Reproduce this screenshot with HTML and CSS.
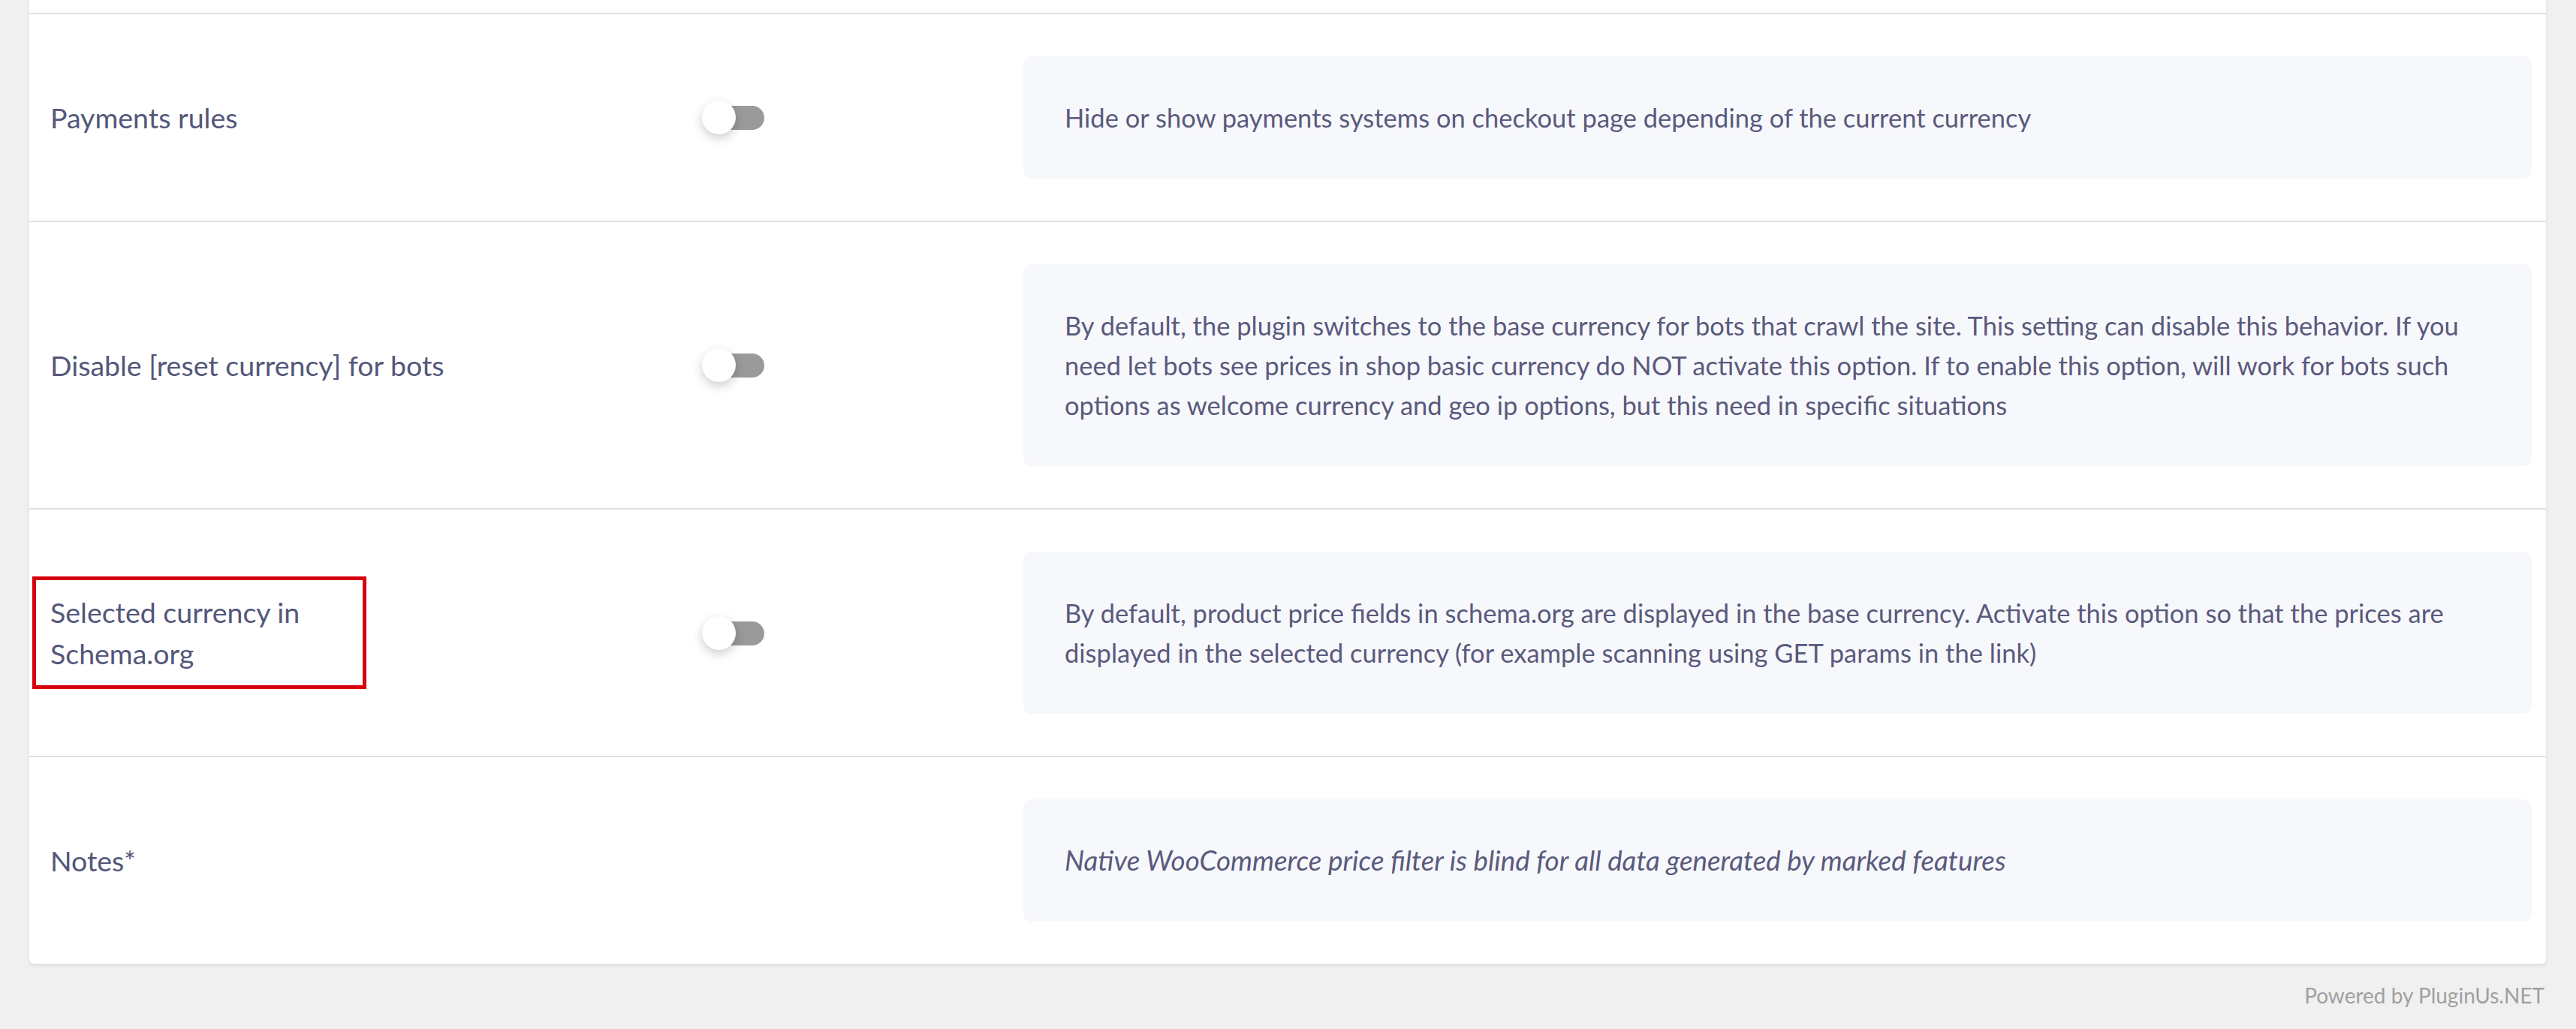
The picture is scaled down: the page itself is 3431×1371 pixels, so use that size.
FILE: index.html
```html
<!DOCTYPE html>
<html lang="en">
<head>
    <meta charset="UTF-8">
    <meta name="viewport" content="width=device-width, initial-scale=1.0">
    <title>Currency Options</title>
    <link rel="stylesheet" href="styles.css">
</head>
<body>

    <div class="options-card">
        <!-- tail of the previous option row -->
        <div class="option-row option-row-tail"></div>

        <div class="option-row">
            <div class="option-label">Payments rules</div>
            <div class="option-control">
                <label class="switch"><span class="switch-knob"></span></label>
            </div>
            <div class="option-desc">
                Hide or show payments systems on checkout page depending of the current currency
            </div>
        </div>

        <div class="option-row">
            <div class="option-label">Disable [reset currency] for bots</div>
            <div class="option-control">
                <label class="switch"><span class="switch-knob"></span></label>
            </div>
            <div class="option-desc">
                By default, the plugin switches to the base currency for bots that crawl the site. This setting can disable this behavior. If you need let bots see prices in shop basic currency do NOT activate this option. If to enable this option, will work for bots such options as welcome currency and geo ip options, but this need in specific situations
            </div>
        </div>

        <div class="option-row">
            <div class="option-label">
                <span class="highlight">Selected currency in<br>Schema.org</span>
            </div>
            <div class="option-control">
                <label class="switch"><span class="switch-knob"></span></label>
            </div>
            <div class="option-desc">
                By default, product price fields in schema.org are displayed in the base currency. Activate this option so that the prices are displayed in the selected currency (for example scanning using GET params in the link)
            </div>
        </div>

        <div class="option-row option-row-last">
            <div class="option-label">Notes*</div>
            <div class="option-control"></div>
            <div class="option-desc option-note">
                Native WooCommerce price filter is blind for all data generated by marked features
            </div>
        </div>
    </div>

    <div class="powered">Powered by PluginUs.NET</div>

</body>
</html>
```

FILE: styles.css
```css
* {
    box-sizing: border-box;
    margin: 0;
    padding: 0;
}

body {
    font-family: 'Lato', 'Open Sans', sans-serif;
    background-color: #f0f0f0;
    color: #5a5a7c;
    font-size: 34.5px;
    line-height: 53px;
}

.options-card {
    background-color: #ffffff;
    margin-left: 39px;
    width: 3352px;
    border-radius: 0 0 6px 6px;
    box-shadow: 0 3px 5px rgba(0, 0, 0, 0.08);
}

/* Option rows: label | switch | description */
.option-row {
    display: grid;
    grid-template-columns: 868px 428px 1fr;
    align-items: center;
    padding: 56px 19px 56px 28px;
    border-bottom: 2px solid #dee2e6;
}

.option-row-tail {
    height: 19px;
    padding: 0;
}

.option-row-last {
    border-bottom: none;
}

.option-label {
    color: #54577a;
    font-size: 37.5px;
    line-height: 55px;
}

.highlight {
    display: inline-block;
    width: 445px;
    margin-left: -24px;
    padding: 15px 20px 15px 19px;
    border: 5px solid #d7000f;
}

/* Switch */
.switch {
    position: relative;
    display: block;
    width: 83px;
    height: 45px;
    cursor: pointer;
}

.switch::before {
    content: '';
    position: absolute;
    left: 5px;
    top: 7px;
    width: 78px;
    height: 32px;
    border-radius: 16px;
    background-color: #9a9a9a;
}

.switch-knob {
    position: absolute;
    left: 0;
    top: 0;
    width: 45px;
    height: 45px;
    border-radius: 50%;
    background-color: #ffffff;
    box-shadow: 0 5px 14px rgba(0, 0, 0, 0.2);
}

/* Description box */
.option-desc {
    background-color: #f7f8fc;
    border-radius: 10px;
    padding: 55px;
    color: #5a5a7c;
}

.option-note {
    font-style: italic;
    font-size: 36.8px;
}

.powered {
    width: 3389px;
    margin-top: 24px;
    text-align: right;
    font-size: 28px;
    line-height: 36px;
    color: #a0a0a0;
}
```
